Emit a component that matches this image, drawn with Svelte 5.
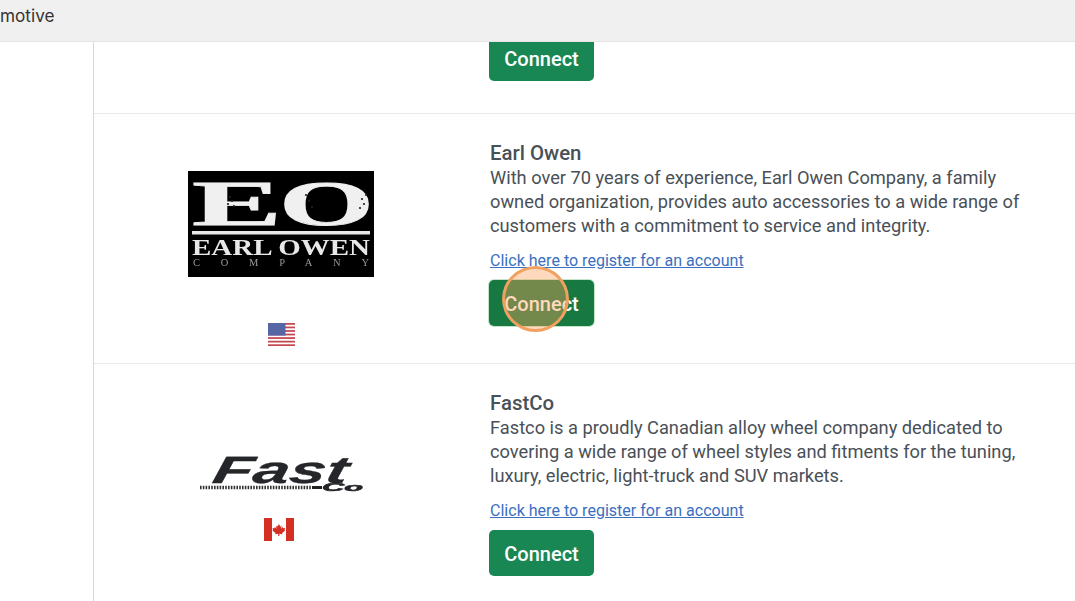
<script>
  const rows = [
    {
      id: 'earl',
      name: 'Earl Owen',
      desc: ['With over 70 years of experience, Earl Owen Company, a family', 'owned organization, provides auto accessories to a wide range of', 'customers with a commitment to service and integrity.']
    },
    {
      id: 'fast',
      name: 'FastCo',
      desc: ['Fastco is a proudly Canadian alloy wheel company dedicated to', 'covering a wide range of wheel styles and fitments for the tuning,', 'luxury, electric, light-truck and SUV markets.']
    }
  ];
  const specks = [[42, 26], [44, 30], [40, 33], [46, 35], [118, 24], [121, 30], [124, 36], [174, 28], [176, 33], [172, 37], [178, 24]];
</script>

<div class="page">
  <header class="top"><span class="crumb">motive</span></header>
  <div class="body">
    <aside class="side"></aside>
    <main class="list">
      <section class="row first">
        <div class="logo-cell"></div>
        <div class="info"><button class="connect">Connect</button></div>
      </section>
      {#each rows as r}
        <section class="row {r.id}">
          <div class="logo-cell">
            {#if r.id === 'earl'}
              <svg class="eo" viewBox="0 0 186 106" width="186" height="106" role="img" aria-label="Earl Owen Company logo">
                <rect width="186" height="106" fill="#000" />
                <text x="4" y="54" class="eo-big" textLength="90" lengthAdjust="spacingAndGlyphs">E</text>
                <text x="91" y="54" class="eo-big" textLength="95" lengthAdjust="spacingAndGlyphs">O</text>
                {#each specks as s}
                  <circle cx={s[0]} cy={s[1]} r="1.1" fill="#222" />
                {/each}
                <rect x="4" y="60" width="178" height="3.5" fill="#e8e8e8" />
                <text x="4" y="84" class="eo-mid" textLength="178" lengthAdjust="spacingAndGlyphs">EARL OWEN</text>
                <text x="5" y="95" class="eo-small" textLength="176">COMPANY</text>
              </svg>
              <svg class="flag us" viewBox="0 0 27 23" width="27" height="23" role="img" aria-label="United States flag">
                <defs>
                  <pattern id="stars" width="2" height="2" patternUnits="userSpaceOnUse">
                    <rect width="2" height="2" fill="#4a5a9c" />
                    <circle cx="1" cy="1" r=".45" fill="#a9b3d6" />
                  </pattern>
                </defs>
                <rect width="27" height="23" fill="#fff" />
                {#each [0, 1, 2, 3, 4, 5, 6] as i}
                  <rect y={i * 3.55} width="27" height="1.75" fill="#c4484e" />
                {/each}
                <rect width="17.5" height="12.6" fill="url(#stars)" />
              </svg>
            {:else}
              <svg class="fastlogo" viewBox="0 0 170 40" width="170" height="40" role="img" aria-label="FastCo logo">
                <text x="21" y="28.5" class="fast-big" textLength="135" lengthAdjust="spacingAndGlyphs" transform="skewX(-12)">Fast</text>
                <line x1="4" y1="33.5" x2="116" y2="33.5" stroke="#333" stroke-width="3.5" stroke-dasharray="1.6 1.2" />
                <rect x="116" y="32" width="10" height="3" fill="#222" />
                <text x="126" y="36.5" class="fast-co" textLength="41" lengthAdjust="spacingAndGlyphs">Co</text>
              </svg>
              <svg class="flag ca" viewBox="0 0 30 23" width="30" height="23" role="img" aria-label="Canadian flag">
                <rect width="30" height="23" fill="#fff" />
                <rect width="8" height="23" fill="#d32f23" />
                <rect x="22" width="8" height="23" fill="#d32f23" />
                <path d="M15 6l1.2 2.4 1.4-.7-.5 3 1.7-1.6.4 1.1 1.9-.3-.6 2 .8.5-3.2 2.6.3 1.2-3-.4V18h-1.2v-2.2l-3 .4.3-1.2-3.2-2.6.8-.5-.6-2 1.9.3.4-1.1 1.7 1.6-.5-3 1.4.7z" fill="#d32f23" />
              </svg>
            {/if}
          </div>
          <div class="info">
            <h2>{r.name}</h2>
            <p>{#each r.desc as line}<span class="line">{line}</span>{/each}</p>
            <a href="#top" class="reg">Click here to register for an account</a>
            <button class="connect" class:active={r.id === 'earl'}>Connect</button>
          </div>
        </section>
      {/each}
    </main>
  </div>
  <div class="click-dot"></div>
</div>

<style>
  :global(body) {
    margin: 0;
    background: #fff;
    font-family: Roboto, "Liberation Sans", sans-serif;
  }
  .page {
    position: relative;
    width: 1075px;
    height: 601px;
    overflow: hidden;
    background: #fff;
    color: #495057;
  }
  .top {
    background: #f0f0f0;
    border-bottom: 1px solid #e4e4e4;
    display: flex;
    align-items: center;
    padding-bottom: 11px;
    height: 30px;
  }
  .crumb {
    font-size: 17.2px;
    color: #333;
    font-family: Inter, Roboto, sans-serif;
  }
  .body {
    display: flex;
    height: 559px;
  }
  .side {
    width: 93px;
    flex: none;
    border-right: 1px solid #d8d8d8;
  }
  .list {
    flex: 1;
    overflow: hidden;
  }
  .row {
    display: grid;
    grid-template-columns: 396px 1fr;
    height: 250px;
    box-sizing: border-box;
    border-bottom: 1px solid #e9e9e9;
  }
  .row.first {
    height: 72px;
    align-items: end;
    padding-bottom: 32px;
  }
  .row.first .connect {
    margin-top: -40px;
  }
  .logo-cell {
    display: flex;
    flex-direction: column;
    align-items: center;
    padding-right: 22px;
  }
  .earl .logo-cell {
    padding-top: 57px;
  }
  .fast .logo-cell {
    padding-top: 90px;
  }
  .eo, .fastlogo, .flag {
    display: block;
    flex: none;
  }
  .eo, .fastlogo, .us {
    filter: blur(0.35px);
  }
  .earl .flag {
    margin-top: 46px;
  }
  .fast .flag {
    margin-top: 24px;
    margin-right: 4px;
  }
  .eo-big {
    font-family: "Liberation Serif", serif;
    font-weight: 700;
    font-size: 64px;
    fill: #f0f0f0;
    stroke: #f0f0f0;
    stroke-width: 0.8;
  }
  .eo-mid {
    font-family: "Liberation Serif", serif;
    font-weight: 700;
    font-size: 22.5px;
    fill: #e8e8e8;
  }
  .eo-small {
    font-family: "Liberation Serif", serif;
    font-size: 10.5px;
    fill: #999;
  }
  .fast-big {
    font-family: "Liberation Sans", sans-serif;
    font-style: italic;
    font-weight: 700;
    font-size: 38px;
    fill: #24262a;
    stroke: #24262a;
    stroke-width: 0.3;
  }
  .fast-co {
    font-family: "Liberation Sans", sans-serif;
    font-style: italic;
    font-weight: 700;
    font-size: 11.5px;
    fill: #24262a;
    stroke: #24262a;
    stroke-width: 0.6;
  }
  .info {
    padding-top: 27px;
  }
  .first .info {
    padding-top: 0;
  }
  h2 {
    margin: 0 0 1px;
    font-size: 20.4px;
    line-height: 24px;
    font-weight: 500;
    color: #495057;
  }
  p {
    margin: 0 0 12px;
    font-size: 18.25px;
    line-height: 24px;
    color: #495057;
  }
  .line {
    display: block;
    white-space: nowrap;
  }
  .reg {
    display: block;
    font-size: 16.06px;
    line-height: 22px;
    color: #3a6fc0;
    text-decoration: underline;
  }
  .connect {
    display: block;
    width: 105px;
    height: 46px;
    margin: 8px 0 0 -1px;
    padding: 1px 0 0;
    border: 0;
    border-radius: 5px;
    background: #198754;
    color: #fff;
    font: 500 20px Roboto, sans-serif;
  }
  .connect.active {
    background: #177842;
    box-shadow: 0 0 0 1px #c3e6cb;
  }
  .click-dot {
    position: absolute;
    left: 502px;
    top: 266px;
    width: 67px;
    height: 66px;
    box-sizing: border-box;
    border-radius: 50%;
    border: 3px solid #f0a060;
    background: rgba(255, 160, 90, 0.4);
  }
</style>
